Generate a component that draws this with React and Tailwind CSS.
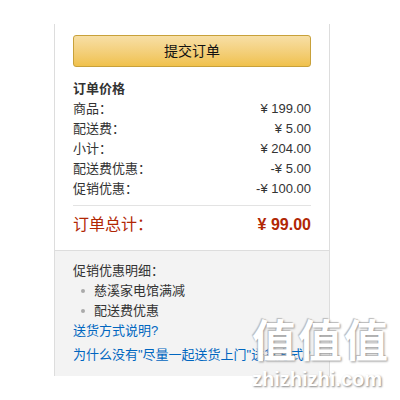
import React from "react";

const rows = [
    ["商品：", "¥ 199.00"],
    ["配送费：", "¥ 5.00"],
    ["小计：", "¥ 204.00"],
    ["配送费优惠：", "-¥ 5.00"],
    ["促销优惠：", "-¥ 100.00"],
];

export default function App() {
    return (
        <div
            className="relative w-[400px] h-[400px] bg-white overflow-hidden text-[13px] text-[#333]"
            style={{ fontFamily: '"Liberation Sans", Arial, "Noto Sans CJK SC", sans-serif' }}
        >
            <div className="ml-[54px] mt-[24px] w-[276px] border-x border-[#dddddd]">
                <div className="px-[18px] pt-[11px] pb-[13px]">
                    <button className="w-full h-[32px] rounded-[3px] border border-[#c8a13a] bg-gradient-to-b from-[#f7dfa5] to-[#f0c14b] text-[14px] text-[#111]">
                        提交订单
                    </button>
                    <div className="mt-[12px] leading-[20px] font-bold text-[#333]">订单价格</div>
                    {rows.map(([label, value]) => (
                        <div key={label} className="flex justify-between leading-[20px]">
                            <span>{label}</span>
                            <span>{value}</span>
                        </div>
                    ))}
                    <div className="mt-[6px] border-t border-[#e3e3e3]" />
                    <div className="mt-[7px] flex justify-between leading-[24px] text-[16px] font-bold text-[#b12704]">
                        <span className="font-normal">订单总计：</span>
                        <span>¥ 99.00</span>
                    </div>
                </div>
                <div className="border-t border-[#dddddd] bg-[#f3f3f3] px-[18px] pt-[10px] pb-[11px]">
                    <div className="leading-[20px]">促销优惠明细：</div>
                    <ul className="leading-[20px]">
                        <li className="flex items-center">
                            <span className="ml-[8px] mr-[9px] w-[4px] h-[4px] rounded-full bg-[#aaaaaa]" />
                            慈溪家电馆满减
                        </li>
                        <li className="flex items-center">
                            <span className="ml-[8px] mr-[9px] w-[4px] h-[4px] rounded-full bg-[#aaaaaa]" />
                            配送费优惠
                        </li>
                    </ul>
                    <div className="leading-[20px] text-[#0066c0]">送货方式说明?</div>
                    <div className="mt-[4px] leading-[20px] text-[#0066c0] whitespace-nowrap">
                        为什么没有"尽量一起送货上门"送货方式?
                    </div>
                </div>
            </div>
            <div className="absolute left-[252px] top-[318px] text-[44px] leading-[48px] font-bold text-white tracking-[2px] [text-shadow:1px_1px_2px_#999,-1px_-1px_1px_#bbb]">
                值值值
            </div>
            <div className="absolute left-[252px] top-[368px] text-[20px] leading-[22px] font-bold text-white [text-shadow:1px_1px_2px_#888]">
                zhizhizhi.com
            </div>
        </div>
    );
}
